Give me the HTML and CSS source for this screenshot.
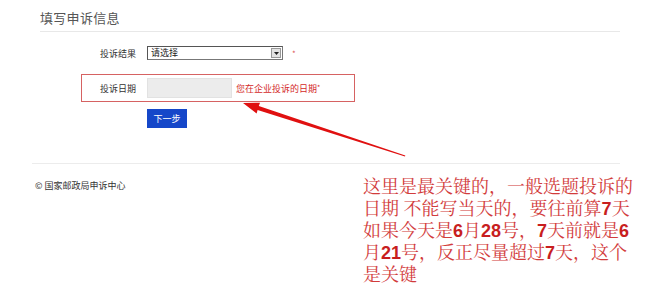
FILE: index.html
```html
<!DOCTYPE html>
<html lang="zh-CN">
<head>
<meta charset="utf-8">
<link rel="stylesheet" href="styles.css">
</head>
<body>
<div class="page">
  <div class="header"><h1 class="title">填写申诉信息</h1></div>
  <div class="row first">
    <span class="label">投诉结果</span>
    <div class="select"><span class="select-text">请选择</span><span class="select-btn"><svg width="7" height="9" viewBox="0 0 7 9"><path d="M1 3 L6 3 L3.5 6 Z" fill="#222"/></svg></span></div>
    <span class="star">*</span>
  </div>
  <div class="row boxed">
    <span class="label">投诉日期</span>
    <div class="input"></div>
    <span class="hint">您在企业投诉的日期<span class="req">*</span></span>
  </div>
  <div class="actions"><span class="btn">下一步</span></div>
  <div class="footer-rule"></div>
  <div class="footer">© 国家邮政局申诉中心</div>
</div>
<svg class="arrow" width="650" height="300" viewBox="0 0 650 300">
  <polygon points="243,103 260,102.8 258.8,106 405.3,155.6 405,156.4 257.6,110 256.6,113.4" fill="#e01010"/>
</svg>
<p class="note">这里是最关键的，一般选题投诉的<br>日期 不能写当天的，要往前算<b>7</b>天<br>如果今天是<b>6</b>月<b>28</b>号，<b>7</b>天前就是<b>6</b><br>月<b>21</b>号，反正尽量超过<b>7</b>天，这个<br>是关键</p>
</body>
</html>
```
FILE: styles.css
```css
html, body { margin: 0; padding: 0; background: #fff; }
body { width: 650px; height: 300px; overflow: hidden; position: relative;
  font-family: "Noto Sans CJK SC", "Liberation Sans", sans-serif; color: #333; }
.page { display: flex; flex-direction: column; }
.header { margin-left: 40px; width: 580px; height: 31px; border-bottom: 1px solid #e8e8e8; }
.title { margin: 0; padding-top: 9px; font-size: 13px; line-height: 18px; font-weight: normal; color: #555; letter-spacing: 0.3px; }
.row { display: flex; align-items: center; }
.label { width: 47px; font-size: 9px; color: #333; flex: none; }
.row.first { margin-top: 14px; margin-left: 100px; height: 14px; }
.select { width: 136px; height: 14px; box-sizing: border-box; border: 1px solid #777; border-top-color: #555; border-left-color: #555;
  display: flex; align-items: center; justify-content: space-between; background: #fff; }
.select-text { font-size: 9px; line-height: 12px; padding-left: 3px; color: #222; }
.select-btn { width: 10px; height: 10px; margin-right: 1px; background: #e4e4e4; border: 1px solid #999; box-sizing: border-box;
  display: flex; align-items: center; justify-content: center; }
.star { margin-left: 9px; font-size: 8px; color: #d55; }
.row.boxed { margin-top: 14px; margin-left: 81px; width: 274px; height: 28px; box-sizing: border-box; border: 1px solid #d66262;
  padding-left: 18px; }
.input { width: 85px; height: 20px; box-sizing: border-box; background: #ececec; border: 1px solid #e2e2e2; }
.hint { margin-left: 4px; font-size: 9px; color: #d42a2a; }
.req { font-size: 7px; vertical-align: top; }
.actions { margin-top: 7px; margin-left: 147px; }
.btn { display: flex; align-items: center; justify-content: center; width: 40px; height: 19px; background: #1547c9; color: #fff; font-size: 9px; }
.footer-rule { margin-top: 35px; margin-left: 32px; width: 588px; border-top: 1px solid #ececec; }
.footer { margin-top: 16px; margin-left: 35px; font-size: 9px; line-height: 12px; color: #333; }
.arrow { position: absolute; left: 0; top: 0; pointer-events: none; }
.note { position: absolute; left: 363px; top: 174px; margin: 0; width: 285px; font-family: "Noto Serif CJK SC", "Noto Sans CJK SC", serif;
  font-size: 18px; line-height: 22px; color: #d23c3c; white-space: nowrap; }
.note b { font-family: "Liberation Sans", sans-serif; font-weight: bold; color: #c81e1e; line-height: 1; }
```
